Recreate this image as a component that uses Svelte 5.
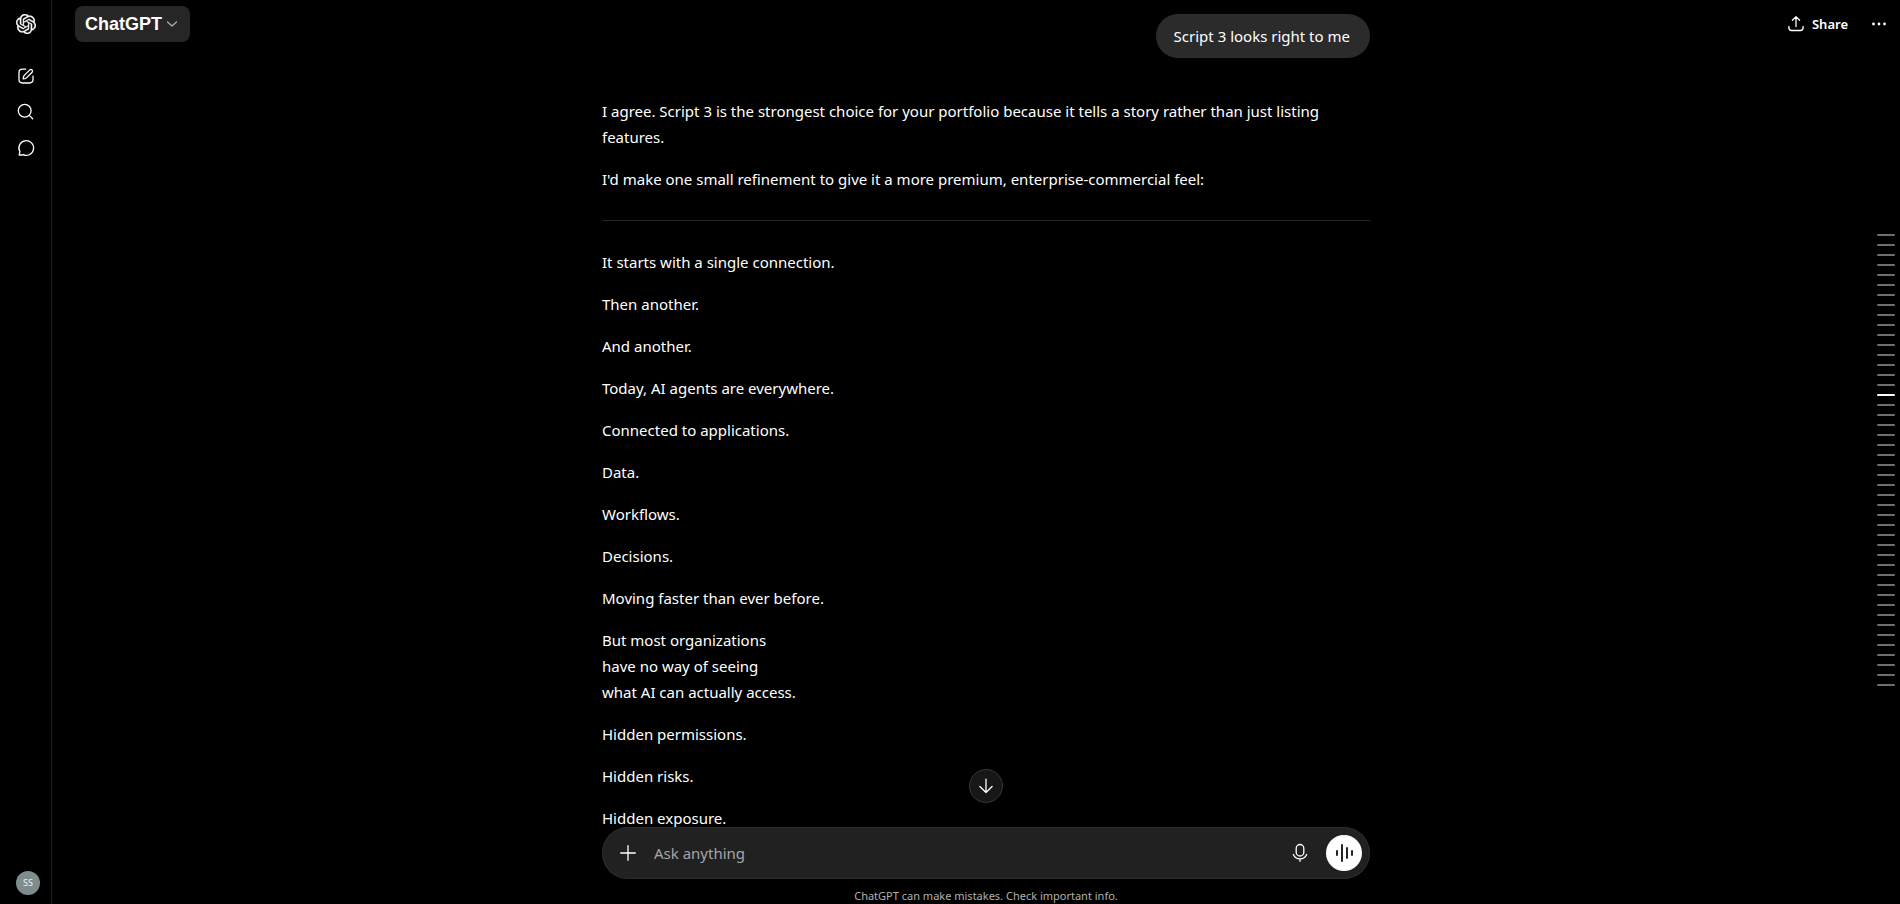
<script>
  const lines = [
    ['It starts with a single connection.'],
    ['Then another.'],
    ['And another.'],
    ['Today, AI agents are everywhere.'],
    ['Connected to applications.'],
    ['Data.'],
    ['Workflows.'],
    ['Decisions.'],
    ['Moving faster than ever before.'],
    ['But most organizations', 'have no way of seeing', 'what AI can actually access.'],
    ['Hidden permissions.'],
    ['Hidden risks.'],
    ['Hidden exposure.']
  ];
  const turns = Array.from({ length: 46 }, (_, i) => i);
  const currentTurn = 16;
  let draft = $state('');
</script>

<div class="shell">
  <nav class="rail" aria-label="Sidebar">
    <a class="rail-item" href="#home" aria-label="Home">
      <svg width="20" height="20" viewBox="0 0 24 24" fill="currentColor" stroke="currentColor" stroke-width=".4"><path d="M22.2819 9.8211a5.9847 5.9847 0 0 0-.5157-4.9108 6.0462 6.0462 0 0 0-6.5098-2.9A6.0651 6.0651 0 0 0 4.9807 4.1818a5.9847 5.9847 0 0 0-3.9977 2.9 6.0462 6.0462 0 0 0 .7427 7.0966 5.98 5.98 0 0 0 .511 4.9107 6.051 6.051 0 0 0 6.5146 2.9001A5.9847 5.9847 0 0 0 13.2599 24a6.0557 6.0557 0 0 0 5.7718-4.2058 5.9894 5.9894 0 0 0 3.9977-2.9001 6.0557 6.0557 0 0 0-.7475-7.0729zm-9.022 12.6081a4.4755 4.4755 0 0 1-2.8764-1.0408l.1419-.0804 4.7783-2.7582a.7948.7948 0 0 0 .3927-.6813v-6.7369l2.02 1.1686a.071.071 0 0 1 .038.052v5.5826a4.504 4.504 0 0 1-4.4945 4.4944zm-9.6607-4.1254a4.4708 4.4708 0 0 1-.5346-3.0137l.142.0852 4.783 2.7582a.7712.7712 0 0 0 .7806 0l5.8428-3.3685v2.3324a.0804.0804 0 0 1-.0332.0615L9.74 19.9502a4.4992 4.4992 0 0 1-6.1408-1.6464zM2.3408 7.8956a4.485 4.485 0 0 1 2.3655-1.9728V11.6a.7664.7664 0 0 0 .3879.6765l5.8144 3.3543-2.0201 1.1685a.0757.0757 0 0 1-.071 0l-4.8303-2.7865A4.504 4.504 0 0 1 2.3408 7.872zm16.5963 3.8558L13.1038 8.364 15.1192 7.2a.0757.0757 0 0 1 .071 0l4.8303 2.7913a4.4944 4.4944 0 0 1-.6765 8.1042v-5.6772a.79.79 0 0 0-.407-.667zm2.0107-3.0231l-.142-.0852-4.7735-2.7818a.7759.7759 0 0 0-.7854 0L9.409 9.2297V6.8974a.0662.0662 0 0 1 .0284-.0615l4.8303-2.7866a4.4992 4.4992 0 0 1 6.6802 4.66zM8.3065 12.863l-2.02-1.1638a.0804.0804 0 0 1-.038-.0567V6.0742a4.4992 4.4992 0 0 1 7.3757-3.4537l-.142.0805L8.704 5.459a.7948.7948 0 0 0-.3927.6813zm1.0976-2.3654l2.602-1.4998 2.6069 1.4998v2.9994l-2.5974 1.4997-2.6067-1.4997Z" /></svg>
    </a>
    <div class="rail-group">
      <button class="rail-item" aria-label="New chat">
        <svg class="line" width="20" height="20" viewBox="0 0 20 20"><path d="M9.6 3.2H6.4C4.2 3.2 3 4.4 3 6.600v7c0 2.200 1.200 3.400 3.400 3.400h7.200c2.200 0 3.400-1.200 3.400-3.400v-3.400" /><path d="M8.100 9.600l5.700-5.700a1.630 1.630 0 0 1 2.300 2.300l-5.700 5.700c-.4.400-.8.600-1.300.700l-1.900.3.300-1.900c.1-.5.300-1 .6-1.400z" /></svg>
      </button>
      <button class="rail-item" aria-label="Search chats">
        <svg class="line" width="20" height="20" viewBox="0 0 20 20"><circle cx="8.700" cy="8.800" r="6.400" /><path d="M13.300 13.400l3.400 3.400" /></svg>
      </button>
      <button class="rail-item" aria-label="Chats">
        <svg class="line" width="20" height="20" viewBox="0 0 20 20"><path d="M3.200 17.100l.7-3.400A7.350 7.350 0 1 1 7 16.600c-1.200.4-2.600.5-3.800.5z" /></svg>
      </button>
    </div>
    <button class="avatar" aria-label="Account">SS</button>
  </nav>

  <main>
    <header>
      <button class="model">ChatGPT
        <svg class="line" width="12" height="12" viewBox="0 0 12 12"><path d="M1.500 4l4.500 4 4.500-4" /></svg>
      </button>
      <div class="actions">
        <button class="share">
          <svg class="line" width="20" height="20" viewBox="0 0 20 20"><path d="M10 12.500V3M6.400 6.300L10 2.800l3.600 3.500M2.900 12.300v1.500c0 1.800.9 2.700 2.700 2.700h8.800c1.800 0 2.700-.9 2.700-2.700v-1.500" /></svg>
          Share
        </button>
        <button class="more" aria-label="More options">
          <svg width="20" height="20" viewBox="0 0 20 20" fill="currentColor"><circle cx="4.500" cy="10" r="1.400" /><circle cx="10" cy="10" r="1.400" /><circle cx="15.500" cy="10" r="1.400" /></svg>
        </button>
      </div>
    </header>

    <div class="thread">
      <div class="column">
        <div class="bubble">Script 3 looks right to me</div>
        <article>
          <p>I agree. Script 3 is the strongest choice for your portfolio because it tells a story rather than just listing features.</p>
          <p>I'd make one small refinement to give it a more premium, enterprise-commercial feel:</p>
          <hr />
          {#each lines as group}
            <p>{#each group as text, i}{#if i > 0}<br />{/if}{text}{/each}</p>
          {/each}
        </article>
      </div>
    </div>

    <nav class="turns" aria-label="Conversation turns">
      {#each turns as t}
        <span class:current={t === currentTurn}></span>
      {/each}
    </nav>

    <footer>
      <button class="to-end" aria-label="Scroll to bottom">
        <svg class="line" width="20" height="20" viewBox="0 0 20 20"><path d="M10 3.200v13.200M3.900 10.500l6.100 6 6.100-6" /></svg>
      </button>
      <form class="composer" onsubmit={(e) => e.preventDefault()}>
        <button type="button" class="tool" aria-label="Add files">
          <svg class="line" width="20" height="20" viewBox="0 0 20 20"><path d="M10 2.700v14.600M2.700 10h14.600" /></svg>
        </button>
        <input type="text" aria-label="Message" placeholder="Ask anything" bind:value={draft} />
        <button type="button" class="tool" aria-label="Dictate">
          <svg class="line" width="20" height="20" viewBox="0 0 20 20"><rect x="6.200" y="1.500" width="7.600" height="11.500" rx="3.800" /><path d="M3.400 11.500c1 2.600 3.500 4.300 6.600 4.300s5.600-1.700 6.600-4.300M10 15.800v2.500" /></svg>
        </button>
        <button type="button" class="voice" aria-label="Start voice mode">
          <svg width="20" height="20" viewBox="0 0 20 20" fill="none" stroke="currentColor" stroke-width="1.800" stroke-linecap="round"><path d="M3 8v4M8 2v16M13 5v10M18 8v4" /></svg>
        </button>
      </form>
      <p class="note">ChatGPT can make mistakes. Check important info.</p>
    </footer>
  </main>
</div>

<style>
  :global(body) {
    margin: 0;
    background: #000;
  }
  .shell {
    display: flex;
    height: 100vh;
    color: #fff;
    font: 15px/26px 'Segoe UI', 'Noto Sans', sans-serif;
  }
  button {
    display: flex;
    align-items: center;
    justify-content: center;
    padding: 0;
    border: 0;
    background: none;
    color: inherit;
    font: inherit;
    cursor: pointer;
  }
  .line {
    fill: none;
    stroke: currentColor;
    stroke-width: 1.3;
    stroke-linecap: round;
    stroke-linejoin: round;
  }
  .rail {
    box-sizing: border-box;
    flex: none;
    display: flex;
    flex-direction: column;
    width: 52px;
    padding: 6px 7px 9px 8px;
    border-right: 1px solid #212121;
  }
  .rail-item {
    display: flex;
    align-items: center;
    justify-content: center;
    width: 36px;
    height: 36px;
    color: #fff;
  }
  .rail-group {
    margin-top: 16px;
  }
  .avatar {
    width: 24px;
    height: 24px;
    margin: auto 0 0 8px;
    border-radius: 50%;
    background: #7f8c8d;
    color: #e4e8e8;
    font-size: 9px;
    font-weight: 500;
    line-height: 12px;
  }
  main {
    position: relative;
    flex: 1;
    min-width: 0;
    display: flex;
    flex-direction: column;
  }
  header {
    position: absolute;
    inset: 0 0 auto 0;
    display: flex;
    align-items: center;
    justify-content: space-between;
    height: 48px;
    padding: 0 11px 0 23px;
  }
  .model {
    gap: 4px;
    height: 36px;
    padding: 0 12px 0 10px;
    border-radius: 8px;
    background: #262626;
    font: bold 18px/28px 'Liberation Sans', Arial, sans-serif;
  }
  .model svg {
    color: #afafaf;
  }
  .actions {
    display: flex;
    gap: 21px;
  }
  .share {
    gap: 6px;
    font-size: 13px;
    font-weight: 600;
  }
  .thread {
    flex: 1;
    min-height: 0;
    overflow: hidden;
    padding: 14px 0 0 20px;
  }
  .column {
    display: flex;
    flex-direction: column;
    max-width: 768px;
    margin: 0 auto;
  }
  .bubble {
    align-self: flex-end;
    padding: 9px 20px 9px 18px;
    border-radius: 22px;
    background: #2b2b2b;
  }
  article {
    margin-top: 40px;
  }
  p {
    margin: 0 0 16px;
  }
  hr {
    height: 1px;
    margin: 28px 0;
    border: 0;
    background: #262626;
  }
  .turns {
    position: absolute;
    top: 234px;
    right: 5px;
    display: flex;
    flex-direction: column;
    gap: 8px;
  }
  .turns span {
    width: 18px;
    height: 2px;
    border-radius: 1px;
    background: #6e6e6e;
  }
  .turns .current {
    background: #fff;
  }
  footer {
    position: relative;
    padding-left: 20px;
  }
  .to-end {
    position: absolute;
    bottom: calc(100% + 24px);
    left: calc(50% - 7px);
    box-sizing: border-box;
    width: 34px;
    height: 34px;
    border: 1px solid #363636;
    border-radius: 50%;
    background: #171717;
  }
  .composer {
    box-sizing: border-box;
    display: flex;
    align-items: center;
    max-width: 768px;
    height: 52px;
    margin: 0 auto;
    padding: 0 8px;
    border-radius: 26px;
    background: #212121;
    box-shadow: inset 0 0 0 1px #2a2a2a;
  }
  .tool {
    width: 36px;
    height: 36px;
  }
  input {
    flex: 1;
    min-width: 0;
    padding: 0 8px;
    border: 0;
    outline: 0;
    background: none;
    color: inherit;
    font: inherit;
  }
  input::placeholder {
    color: #a6a6a6;
    opacity: 1;
  }
  .voice {
    width: 36px;
    height: 36px;
    margin-left: 8px;
    border-radius: 50%;
    background: #fff;
    color: #0d0d0d;
  }
  .note {
    margin: 0;
    padding: 9px 0 0;
    color: #b0b0b0;
    font-size: 11px;
    line-height: 16px;
    text-align: center;
  }
</style>
